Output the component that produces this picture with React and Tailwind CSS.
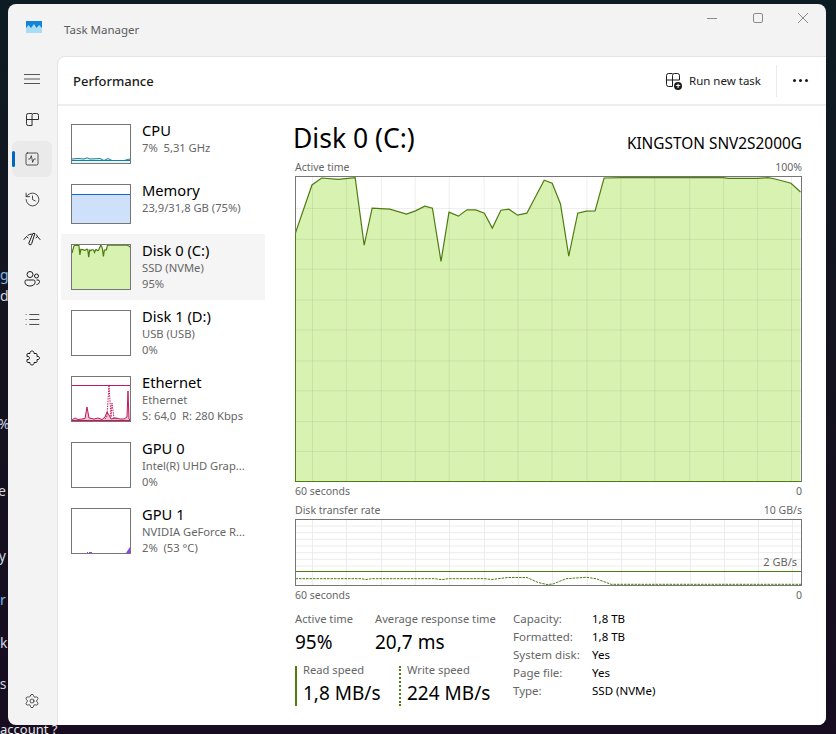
import { History, List, Settings, SquareActivity } from 'lucide-react';

const diskLine = [
  [295.5, 232], [312, 184], [321.7, 177], [338.3, 178.3], [355.3, 176.7], [364.3, 244.3], [372.3, 207.3], [390, 208.3],
  [406.7, 213.3], [415.7, 210], [425, 205.3], [432.7, 207.3], [441.3, 260.7], [449.3, 211.3], [458.7, 215.3], [467.3, 209],
  [476, 209], [484.7, 212.3], [492.7, 227.3], [501.3, 209.3], [509.3, 208.3], [518, 214.3], [527.3, 212.3], [544.7, 179.3],
  [552.7, 182.3], [561, 203], [569.3, 255.3], [578.3, 212.3], [586.7, 210.3], [595.7, 210], [604.7, 177], [622.7, 176.7],
  [724, 176.7], [729, 177.3], [759, 177.3], [769, 176.7], [776, 178], [792, 182.3], [801.5, 191],
];
const toPoints = (pts) => pts.map((p) => p.join(',')).join(' ');
const diskArea = `295.5,482 ${toPoints(diskLine)} 801.5,482`;

const writeLine = [
  [295.5, 578.7], [361, 578.7], [366, 579.5], [372, 578.7], [435, 578.7], [442, 579.7], [448, 578.7], [485, 578.7], [492, 579.5],
  [508, 577.5], [527, 577.5], [538, 582.5], [547, 584.5], [553, 584], [566, 578.7], [586, 577.3], [596, 578.7], [611, 584.3], [801.5, 584.3],
];

const xGrid = [312, 346, 381, 415, 449, 484, 518, 552, 587, 621, 655, 690, 724, 758, 792];
const yGrid = [207, 238, 268, 299, 329, 360, 390, 421, 451];
const yGridSmall = [526, 532.7, 539.3, 546, 552.7, 559.3, 566];

const Thumb = ({ tall, children }) => (
  <div className={`w-[60px] shrink-0 border border-[#767676] bg-white overflow-hidden ${tall ? 'h-[46px]' : 'h-10'}`}>
    <svg viewBox={tall ? '0 0 58 44' : '0 0 58 38'} className="w-full h-full block">
      {children}
    </svg>
  </div>
);

const cpuThumb = (
  <g>
    <polygon points="0,34 6,33.5 12,34 15,33 18,34 28,33.5 32,35 36,33.5 40,35 52,35 58,34 58,38 0,38" fill="#e6f3f8" />
    <polyline points="0,34 6,33.500 12,34 15,32.800 18,34 28,33.500 32,35.500 36,33.500 40,35.500 52,35.500 58,34" fill="none" stroke="#17819f" strokeWidth="1" />
    <line x1="0" y1="35.500" x2="58" y2="35.500" stroke="#17819f" strokeWidth="1" />
  </g>
);

const memThumb = (
  <g>
    <rect x="0" y="9" width="58" height="29" fill="#cfe1fa" />
    <line x1="0" y1="9.500" x2="58" y2="9.500" stroke="#1068d4" strokeWidth="1" />
  </g>
);

const diskThumb = (
  <svg x="0" y="0" width="58" height="44" viewBox="295.5 176 506 306" preserveAspectRatio="none">
    <polygon points={diskArea} fill="#d8f2b2" />
    <polyline points={toPoints(diskLine)} fill="none" stroke="#4e7c0f" strokeWidth="1.2" vectorEffect="non-scaling-stroke" />
  </svg>
);

const ethSolid = '0,43 3,41 6,42.500 10,42 13,41.500 15,30 17,41 22,42 26,41 30,42.500 33,40 35,35 37,38 39,42 44,41 48,42 52,42 55,40 56,14 57,42 58,43';

const ethThumb = (
  <g>
    <polygon points={`${ethSolid} 58,44 0,44`} fill="#f3c4d5" />
    <polyline points={ethSolid} fill="none" stroke="#c2185b" strokeWidth="1" />
    <polyline points="33,42 35,39 37,8 39,40 40,26 42,41 46,42" fill="none" stroke="#c2185b" strokeWidth="1" strokeDasharray="1.500 1" />
    <line x1="0" y1="8.500" x2="58" y2="8.500" stroke="#c2185b" strokeWidth="1" />
    <line x1="0" y1="43.500" x2="58" y2="43.500" stroke="#c2185b" strokeWidth="1" />
  </g>
);

const gpuThumb = (
  <g>
    <rect x="15" y="43" width="1" height="1" fill="#8a3ffc" />
    <rect x="17" y="43" width="3" height="1" fill="#8a3ffc" />
    <polygon points="54,44 58,38 58,44" fill="#8a3ffc" />
  </g>
);

const devices = [
  { name: 'CPU', lines: ['7%  5,31 GHz'], thumb: cpuThumb },
  { name: 'Memory', lines: ['23,9/31,8 GB (75%)'], thumb: memThumb },
  { name: 'Disk 0 (C:)', lines: ['SSD (NVMe)', '95%'], thumb: diskThumb, active: true, tall: true },
  { name: 'Disk 1 (D:)', lines: ['USB (USB)', '0%'], tall: true },
  { name: 'Ethernet', lines: ['Ethernet', 'S: 64,0  R: 280 Kbps'], thumb: ethThumb, tall: true },
  { name: 'GPU 0', lines: ['Intel(R) UHD Grap...', '0%'], tall: true },
  { name: 'GPU 1', lines: ['NVIDIA GeForce R...', '2%  (53 °C)'], thumb: gpuThumb, tall: true },
];

const specs = [
  ['Capacity:', '1,8 TB'],
  ['Formatted:', '1,8 TB'],
  ['System disk:', 'Yes'],
  ['Page file:', 'Yes'],
  ['Type:', 'SSD (NVMe)'],
];

const AppsIcon = ({ className }) => (
  <svg viewBox="0 0 14 14" className={className} fill="none" stroke="currentColor" strokeWidth="1">
    <path d="M6.500 7V2.500a2 2 0 0 1 2-2h3a2 2 0 0 1 2 2V7ZM6.500 7h-6V2.500a2 2 0 0 1 2-2h4M6.500 7v6.500h-4a2 2 0 0 1-2-2V7" />
  </svg>
);

const GaugeIcon = () => (
  <svg viewBox="0 0 18 14" className="w-[18px] h-[14px]" fill="none" stroke="#1b1b1b" strokeWidth="1" strokeLinecap="round" strokeLinejoin="round">
    <path d="M1 7.500 3.500 4.500 5 5.800M5 3.200C6 2.600 7.200 2.200 8.500 2.100M13.500 2.800 14.500 4.500 13 5.800M14.500 4.500 17 7.500" />
    <path d="M11.800 1.800 8.600 11.800a1.400 1.400 0 0 1-2.700-.8L9.700 1.800Z" />
  </svg>
);

const UsersIcon = () => (
  <svg viewBox="0 0 16 16" className="w-4 h-4" fill="none" stroke="#1b1b1b" strokeWidth="1">
    <circle cx="6" cy="3.500" r="3" />
    <circle cx="12.500" cy="5" r="2" />
    <path d="M1 10.500a1.500 1.500 0 0 1 1.500-1.500h7a1.500 1.500 0 0 1 1.500 1.500v1c0 2-2.200 3.500-5 3.500s-5-1.500-5-3.500Z" />
    <path d="M12.500 9h1.500a1.500 1.500 0 0 1 1.500 1.500c0 1.800-1.300 3-3 3" />
  </svg>
);

const PuzzleIcon = () => (
  <svg viewBox="0 0 16 16" className="w-4 h-4 -mt-[3px]" fill="none" stroke="#1b1b1b" strokeWidth="1" strokeLinejoin="round">
    <path d="M4 3.500H6C5.600 2 6.800 1 8 1S10.400 2 10 3.500H12A1 1 0 0 1 13 4.500V6.500C14.500 6 15.500 7 15.500 8S14.500 10 13 9.500V11.500A1 1 0 0 1 12 12.500H10C10.400 14 9.200 15 8 15S5.600 14 6 12.500H4A1 1 0 0 1 3 11.500V9.500C4.500 10 5.500 9 5.500 8S4.500 6 3 6.500V4.500A1 1 0 0 1 4 3.500Z" />
  </svg>
);

const navItems = [
  { key: 'apps', icon: <AppsIcon className="w-[13px] h-[13px] text-[#1b1b1b]" /> },
  { key: 'perf', active: true, icon: <SquareActivity size={16} strokeWidth={1.1} color="#1b1b1b" /> },
  { key: 'history', icon: <History size={17} strokeWidth={1.1} color="#1b1b1b" /> },
  { key: 'startup', icon: <GaugeIcon /> },
  { key: 'users', icon: <UsersIcon /> },
  { key: 'details', icon: <List size={17} strokeWidth={1.1} color="#1b1b1b" /> },
  { key: 'services', icon: <PuzzleIcon /> },
];

const Sidebar = () => (
  <div className="w-[49px] shrink-0 flex flex-col items-start pl-1 pt-[3px]">
    <div className="w-10 h-10 flex items-center justify-center">
      <svg viewBox="0 0 16 12" className="w-4 h-3" stroke="#555" strokeWidth="1">
        <path d="M0 1.500H16M0 6H16M0 10.500H16" />
      </svg>
    </div>
    {navItems.map((item) => (
      <div
        key={item.key}
        className={`relative w-10 h-9 my-[2px] flex items-center justify-center rounded-md ${item.active ? 'bg-[#eaeaea]' : ''}`}
      >
        {item.active && <span className="absolute left-0 top-[10px] w-[3px] h-4 rounded-full bg-[#0067c0]" />}
        {item.icon}
      </div>
    ))}
    <div className="mt-auto mb-[6px] w-10 h-9 flex items-center justify-center">
      <Settings size={16} strokeWidth={1.1} color="#1b1b1b" />
    </div>
  </div>
);

const DeviceRow = ({ device }) => (
  <div className={`flex gap-[11px] px-[10px] py-[10px] ${device.active ? 'bg-[#f5f5f5]' : ''}`}>
    <Thumb tall={device.tall}>{device.thumb}</Thumb>
    <div className={`min-w-0 -mt-[3px] ${device.tall ? 'h-[46px]' : 'h-10'}`}>
      <div className="text-[14.7px] leading-[19px] text-black whitespace-nowrap">{device.name}</div>
      {device.lines.map((line) => (
        <div key={line} className="text-[11.2px] leading-[16px] text-[#666] whitespace-pre">{line}</div>
      ))}
    </div>
  </div>
);

const ActiveChart = () => (
  <div className="h-[306px] border border-[#767676] border-l-0 border-b-0">
    <svg viewBox="295 176 507 306" className="w-full h-full block" preserveAspectRatio="none">
      <rect x="295" y="176" width="507" height="306" fill="#fff" />
      <polygon points={diskArea} fill="#d8f2b2" />
      {xGrid.map((x) => <line key={x} x1={x + 0.5} y1="176" x2={x + 0.5} y2="482" stroke="#000" strokeOpacity="0.075" strokeWidth="1" />)}
      {yGrid.map((y) => <line key={y} x1="295" y1={y + 0.5} x2="802" y2={y + 0.5} stroke="#000" strokeOpacity="0.075" strokeWidth="1" />)}
      <polyline points={toPoints(diskLine)} fill="none" stroke="#4e7c0f" strokeWidth="1.2" />
      <line x1="295.500" y1="176" x2="295.500" y2="232" stroke="#767676" strokeWidth="1" />
      <line x1="295.500" y1="232" x2="295.500" y2="482" stroke="#4e7c0f" strokeWidth="1" />
      <line x1="295" y1="481.500" x2="802" y2="481.500" stroke="#4e7c0f" strokeWidth="1" />
    </svg>
  </div>
);

const TransferChart = () => (
  <div className="relative h-[67px] border border-[#767676]">
    <svg viewBox="296 520 505 65" className="w-full h-full block" preserveAspectRatio="none">
      {xGrid.map((x) => <line key={x} x1={x + 0.5} y1="520" x2={x + 0.5} y2="585" stroke="#ececec" strokeWidth="1" />)}
      {yGridSmall.map((y) => <line key={y} x1="296" y1={y} x2="801" y2={y} stroke="#ececec" strokeWidth="1" />)}
      <line x1="296" y1="571.500" x2="801" y2="571.500" stroke="#4e7c0f" strokeWidth="1" />
      <polyline points={toPoints(writeLine)} fill="none" stroke="#4e7c0f" strokeWidth="1" strokeDasharray="2.500 1" />
    </svg>
    <span className="absolute right-[4px] top-[34px] text-[11px] leading-[16px] text-[#666]">2 GB/s</span>
  </div>
);

const ChartLabel = ({ left, right }) => (
  <div className="flex justify-between text-[10.5px] leading-[14px] text-[#666]">
    <span>{left}</span>
    <span>{right}</span>
  </div>
);

const Stat = ({ label, value, className = '' }) => (
  <div className={className}>
    <div className="text-[11.2px] leading-[16px] text-[#666] whitespace-nowrap">{label}</div>
    <div className="text-[19px] leading-[28px] text-black whitespace-nowrap mt-[1px]">{value}</div>
  </div>
);

const DiskPanel = () => (
  <div className="flex-1 min-w-0 pl-[29px] pr-6 pt-[15px]">
    <div className="flex justify-between items-end h-[35px]">
      <h1 className="-ml-[2px] text-[26.5px] leading-[35px] text-black font-normal">Disk 0 (C:)</h1>
      <span className="text-[15.4px] leading-[20px] text-black mb-[2px]">KINGSTON SNV2S2000G</span>
    </div>
    <div className="mt-1 mb-[2px]">
      <ChartLabel left="Active time" right="100%" />
    </div>
    <ActiveChart />
    <div className="mt-[2px]">
      <ChartLabel left="60 seconds" right="0" />
    </div>
    <div className="mt-[5px]">
      <ChartLabel left="Disk transfer rate" right="10 GB/s" />
    </div>
    <div className="mt-[2px]">
      <TransferChart />
    </div>
    <div className="mt-[2px]">
      <ChartLabel left="60 seconds" right="0" />
    </div>
    <div className="flex mt-[9px]">
      <div className="w-[218px] shrink-0">
        <div className="flex">
          <Stat label="Active time" value="95%" className="w-20" />
          <Stat label="Average response time" value="20,7 ms" />
        </div>
        <div className="flex mt-[10px]">
          <div className="w-[104px] h-10 border-l-2 border-[#4e7c0f] pl-[6px]">
            <Stat label="Read speed" value="1,8 MB/s" className="-mt-1" />
          </div>
          <div className="h-10 border-l-2 border-dotted border-[#4e7c0f] pl-[6px]">
            <Stat label="Write speed" value="224 MB/s" className="-mt-1" />
          </div>
        </div>
      </div>
      <div className="grid grid-cols-[79px_auto] auto-rows-[18px] text-[11.5px] leading-[16px] justify-start">
        {specs.map(([label, value]) => (
          <div key={label} className="contents">
            <span className="text-[#666]">{label}</span>
            <span className="text-black">{value}</span>
          </div>
        ))}
      </div>
    </div>
  </div>
);

const backdropText = [
  ['left-0 top-[266px] text-[#7fb7e8]', 'gi'],
  ['left-0 top-[287px] text-[#cfd8e3]', 'd'],
  ['-left-[2px] top-[415px] text-[#cfd8e3]', '%'],
  ['-left-[2px] top-[482px] text-[#cfd8e3]', 'e'],
  ['-left-[9px] top-[547px] text-[#cfd8e3]', 'ay'],
  ['left-0 top-[591px] text-[#7fb7e8]', 'r'],
  ['left-0 top-[634px] text-[#cfd8e3]', 'k'],
  ['-left-[9px] top-[675px] text-[#cfd8e3]', 'us'],
];

export default function App() {
  return (
    <div
      className="relative w-[836px] h-[734px] overflow-hidden bg-gradient-to-b from-[#0c1c22] via-[#14121f] to-[#170c20] pt-1 pl-2 text-[#1b1b1b]"
      style={{ fontFamily: '"Noto Sans", "Open Sans", sans-serif' }}
    >
      {backdropText.map(([pos, text]) => (
        <span key={pos} className={`absolute text-sm leading-[18px] ${pos}`}>{text}</span>
      ))}
      <span className="absolute left-0 top-[720px] text-[13px] leading-[18px] text-[#e6e6e6]">account ?</span>

      <div className="relative w-[818px] h-[721px] rounded-lg bg-[#f3f3f3] flex flex-col overflow-hidden">
        <div className="h-[52px] shrink-0 flex items-start">
          <svg viewBox="0 0 16 12" className="ml-[18px] mt-[17px] w-4 h-3">
            <rect width="16" height="12" fill="#a9dcf5" />
            <path d="M0 7 2.500 4 5 7 8 3 10.500 7 13 4 16 7V0H0Z" fill="#1384d8" />
          </svg>
          <span className="ml-[22px] mt-[18px] text-[11.5px] leading-4 text-[#5c5c5c]">Task Manager</span>
          <div className="ml-auto mr-[18px] mt-[9px] flex items-center gap-[35.5px] text-[#8a8a8a]">
            <svg viewBox="0 0 10 10" className="w-[10px] h-[10px]" stroke="currentColor"><path d="M0 5.500H10" /></svg>
            <svg viewBox="0 0 10 10" className="w-[10px] h-[10px]" fill="none" stroke="currentColor"><rect x=".5" y=".5" width="9" height="9" rx="1.500" /></svg>
            <svg viewBox="0 0 10 10" className="w-[10px] h-[10px]" stroke="currentColor"><path d="M0 0 10 10M10 0 0 10" /></svg>
          </div>
        </div>

        <div className="flex-1 min-h-0 flex">
          <Sidebar />
          <div className="flex-1 min-w-0 flex flex-col bg-white rounded-tl-lg border-l border-t border-[#e5e5e5]">
            <div className="h-[49px] shrink-0 flex items-center border-b-2 border-[#eeeeee] pl-[15px]">
              <span className="text-[13px] font-medium text-[#1b1b1b] pt-[2px]">Performance</span>
              <div className="ml-auto flex items-center">
                <div className="relative w-[15px] h-[15px] mr-2">
                  <AppsIcon className="w-[14px] h-[14px] text-[#1b1b1b]" />
                  <span className="absolute -right-px -bottom-[2px] w-2 h-2 rounded-full bg-[#1b1b1b] text-white text-[8px] leading-[8px] text-center font-bold">+</span>
                </div>
                <span className="text-[11.5px] text-[#1b1b1b]">Run new task</span>
                <div className="w-px h-8 bg-[#ebebeb] ml-[15px]" />
                <div className="flex gap-[3px] ml-4 mr-[18px]">
                  <span className="w-[3px] h-[3px] rounded-full bg-[#1b1b1b]" />
                  <span className="w-[3px] h-[3px] rounded-full bg-[#1b1b1b]" />
                  <span className="w-[3px] h-[3px] rounded-full bg-[#1b1b1b]" />
                </div>
              </div>
            </div>
            <div className="flex-1 min-h-0 flex">
              <div className="w-[208px] shrink-0 pl-[3px] pt-2">
                <div className="w-[204px]">
                  {devices.map((device) => <DeviceRow key={device.name} device={device} />)}
                </div>
              </div>
              <DiskPanel />
            </div>
          </div>
        </div>
      </div>
    </div>
  );
}
